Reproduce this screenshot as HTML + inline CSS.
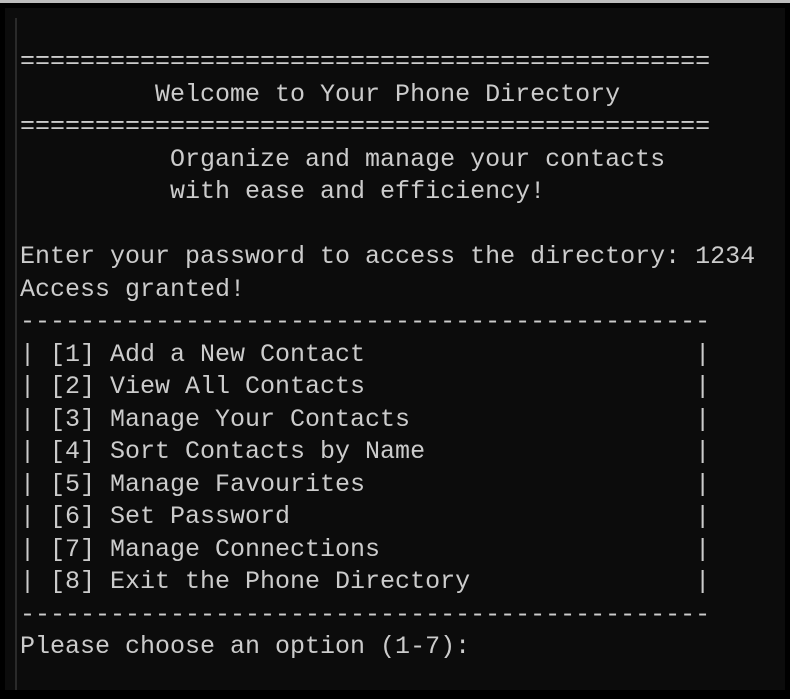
<!DOCTYPE html>
<html><head><meta charset="utf-8"><style>
html,body{margin:0;padding:0;}
body{width:790px;height:699px;background:#000;position:relative;overflow:hidden;}
.top{position:absolute;left:0;top:0;width:790px;height:3px;background:#bdbdbd;}
.term{position:absolute;left:5px;top:8px;width:780px;height:682px;background:#0c0c0c;}
.edge{position:absolute;left:10px;top:10px;width:2px;height:672px;background:#2a2a2a;}
pre{position:absolute;left:15px;top:38px;margin:0;font-family:"Liberation Mono",monospace;font-size:25px;line-height:32.5px;color:#cccccc;letter-spacing:0px;}
</style></head><body>
<div class="top"></div>
<div class="term"><div class="edge"></div>
<pre>==============================================
         Welcome to Your Phone Directory
==============================================
          Organize and manage your contacts
          with ease and efficiency!

Enter your password to access the directory: 1234
Access granted!
----------------------------------------------
| [1] Add a New Contact                      |
| [2] View All Contacts                      |
| [3] Manage Your Contacts                   |
| [4] Sort Contacts by Name                  |
| [5] Manage Favourites                      |
| [6] Set Password                           |
| [7] Manage Connections                     |
| [8] Exit the Phone Directory               |
----------------------------------------------
Please choose an option (1-7):</pre></div>
</body></html>
